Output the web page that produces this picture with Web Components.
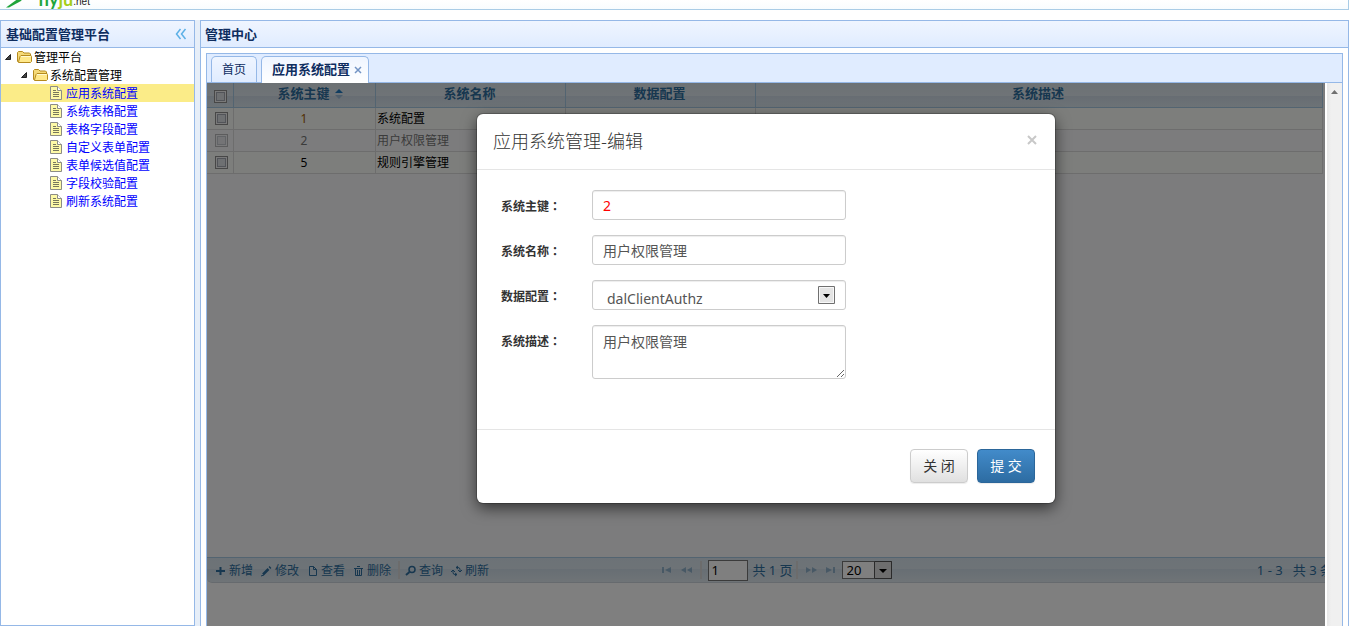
<!DOCTYPE html>
<html lang="zh-CN">
<head>
<meta charset="utf-8">
<title>管理中心</title>
<style>
html, body { margin: 0; height: 100%; }
body {
  --line: #95b8e7;
  --ink: #0e2d5f;
  --grid-ink: #2e6e9e;
  --grid-line: #a6c9e2;
  font: 12px/18px "Noto Sans", "Noto Sans CJK SC", sans-serif;
  color: #000; background: #fff; overflow: hidden;
}
</style>
</head>
<body>
<app-shell>
  <site-banner slot="banner"></site-banner>
  <side-panel slot="west" heading="基础配置管理平台">
    <tree-item level="0" kind="folder">管理平台</tree-item>
    <tree-item level="1" kind="folder">系统配置管理</tree-item>
    <tree-item level="2" kind="page" selected>应用系统配置</tree-item>
    <tree-item level="2" kind="page">系统表格配置</tree-item>
    <tree-item level="2" kind="page">表格字段配置</tree-item>
    <tree-item level="2" kind="page">自定义表单配置</tree-item>
    <tree-item level="2" kind="page">表单候选值配置</tree-item>
    <tree-item level="2" kind="page">字段校验配置</tree-item>
    <tree-item level="2" kind="page">刷新系统配置</tree-item>
  </side-panel>
  <main-panel slot="center" heading="管理中心">
    <tab-button slot="tabs">首页</tab-button>
    <tab-button slot="tabs" active>应用系统配置</tab-button>
    <work-frame>
      <data-grid></data-grid>
      <pager-bar></pager-bar>
      <edit-dialog slot="dialog"></edit-dialog>
    </work-frame>
  </main-panel>
</app-shell>

<script>
const define = (name, html, setup) => {
  const tpl = document.createElement('template');
  tpl.innerHTML = html;
  customElements.define(name, class extends HTMLElement {
    constructor() {
      super();
      this.attachShadow({ mode: 'open' }).append(tpl.content.cloneNode(true));
    }
    connectedCallback() { if (setup) setup(this, this.shadowRoot); }
  });
};

define('app-shell', `
<style>
:host { display: flex; flex-direction: column; height: 100vh; }
.regions { flex: 1; min-height: 0; display: flex; gap: 5px; margin-top: 10px; background: #e6eef8; }
</style>
<slot name="banner"></slot>
<div class="regions"><slot name="west"></slot><slot name="center"></slot></div>`);

define('site-banner', `
<style>
:host { display: flex; align-items: flex-end; box-sizing: border-box; height: 10px; overflow: hidden;
  border: solid #a9cce6; border-width: 0 1px 1px 0; background: linear-gradient(#fff, #f8fcfe); padding-left: 5px; }
svg { width: 33px; height: 20px; flex: none; }
b { font: bold 18px/20px Lato, "Noto Sans", sans-serif; color: #1fa53c; }
i { font-style: normal; color: #a5ce1b; }
small { font: 10px/14px "Liberation Sans", sans-serif; color: #222; }
</style>
<svg viewBox="0 0 33 20"><path d="M1 18.500 L14 9 H18 L16 12 L4 18.500 Z" fill="#1fa53c"/></svg>
<b>fly<i>ju</i></b><small>.net</small>`);

define('side-panel', `
<style>
:host { display: flex; flex-direction: column; box-sizing: border-box; width: 195px; flex: none;
  border: 1px solid var(--line); background: #fff; }
header { display: flex; align-items: center; justify-content: space-between; box-sizing: border-box; height: 27px;
  padding: 0 7px 0 5px; border-bottom: 1px solid var(--line); background: linear-gradient(#eff5ff, #e0ecff); }
h2 { margin: 0; font-size: 13px; line-height: 16px; color: var(--ink); }
button { border: 0; padding: 0; background: none; height: 12px; }
svg { display: block; }
</style>
<header><h2></h2><button aria-label="收起"><svg width="12" height="12" fill="none" stroke="#5cb0e6" stroke-width="1.5"><path d="M5.500 1 1.500 6l4 5M10.500 1l-4 5 4 5"/></svg></button></header>
<nav><slot></slot></nav>`, (el, r) => { r.querySelector('h2').textContent = el.getAttribute('heading'); });

const folderIcon = `<svg width="16" height="14" viewBox="0 0 16 14"><path d="M.5 11.500V2.500L1.500 1.500h4l1.500 1.500h5.500l1 1V6" fill="#f5d977" stroke="#b58a1e"/><path d="M.5 11.500 1.500 12.500h12l1-1V6.500L14 5.500H4L3 6.500 1.500 12" fill="#ffe88a" stroke="#b58a1e"/><path d="M4 6.500h9.500" stroke="#fff9d0"/></svg>`;
const pageIcon = `<svg width="16" height="14" viewBox="0 0 16 14"><path d="M1.500.5h7l4 4v9h-11z" fill="#fdf9a6" stroke="#8c8c86"/><path d="M8.500.5v4h4" fill="#fff" stroke="#8c8c86"/><path d="M4 4.500h3M4 6.500h6M4 8.500h6M4 10.500h6" stroke="#77775c"/></svg>`;

define('tree-item', `
<style>
:host { display: block; }
:host([selected]) { background: #fbec88; }
div { display: flex; align-items: center; height: 18px; }
.arrow { width: 16px; height: 18px; }
.icon { display: flex; width: 16px; margin-right: 1px; }
.arrow, .icon { flex: none; }
a { padding-top: 2px; color: #00f; text-decoration: none; white-space: nowrap; }
:host([kind=folder]) a { color: #000; }
:host([kind=page]) .arrow svg { display: none; }
</style>
<div><span class="arrow"><svg width="16" height="18"><path d="M4.500 11.500h5v-5z" fill="#444" stroke="#222"/></svg></span><span class="icon"></span><a href="#"><slot></slot></a></div>`,
(el, r) => {
  r.querySelector('div').style.paddingLeft = el.getAttribute('level') * 16 + 'px';
  r.querySelector('.icon').innerHTML = el.getAttribute('kind') === 'folder' ? folderIcon : pageIcon;
});

define('main-panel', `
<style>
:host { display: flex; flex-direction: column; flex: 1; min-width: 0; box-sizing: border-box;
  border: solid var(--line); border-width: 1px 1px 0; background: #fff; }
header { box-sizing: border-box; height: 27px; padding: 5px 4px; border-bottom: 1px solid var(--line);
  background: linear-gradient(#eff5ff, #e0ecff); }
h2 { margin: 0; font-size: 13px; line-height: 16px; color: var(--ink); }
.tabs { flex: 1; min-height: 0; display: flex; flex-direction: column; margin: 5px 5px 0;
  border: solid var(--line); border-width: 1px 1px 0; }
.strip { display: flex; gap: 4px; box-sizing: border-box; height: 29px; padding: 2px 4px 0; background: #e0ecff;
  border-bottom: 1px solid var(--line); }
</style>
<header><h2></h2></header>
<div class="tabs"><div class="strip"><slot name="tabs"></slot></div><slot></slot></div>`,
(el, r) => { r.querySelector('h2').textContent = el.getAttribute('heading'); });

define('tab-button', `
<style>
:host { display: flex; align-items: center; box-sizing: border-box; height: 26px; border: 1px solid var(--line); border-bottom: 0;
  border-radius: 5px 5px 0 0; padding: 0 10px; background: linear-gradient(#eff5ff, #e0ecff); }
:host([active]) { height: 27px; padding: 0 6px 2px 10px; background: linear-gradient(#eff5ff, #fff); }
button { border: 0; padding: 0; background: none; font: inherit; color: var(--ink); }
:host([active]) .name { font-weight: bold; font-size: 13px; }
.close { display: none; margin: 2px 0 0 4px; height: 8px; }
:host([active]) .close { display: block; }
svg { display: block; }
</style>
<button class="name"><slot></slot></button><button class="close" aria-label="关闭标签"><svg width="8" height="8" stroke="#7394c4" stroke-width="1.500"><path d="M1 1l6 6M7 1l-6 6"/></svg></button>`);

define('work-frame', `
<style>
:host { flex: 1; min-height: 0; display: flex; }
.view { position: relative; flex: 1; min-width: 0; display: flex; flex-direction: column; overflow: hidden; }
.shade { position: absolute; inset: 0; background: rgba(0,0,0,.5); padding: 31px 20px; display: flex; align-items: flex-start; justify-content: center; }
.bar { width: 16px; box-sizing: border-box; border-left: 1px solid #fff; background: linear-gradient(90deg, #e6e6e6, #f0f0f0 4px); flex: none; display: flex; justify-content: center; padding: 7px 1px 0 0; margin-left: 1px; }
</style>
<div class="view"><slot></slot><div class="shade"><slot name="dialog"></slot></div></div>
<div class="bar"><svg width="7" height="4"><path d="M0 4 3.500 0 7 4z" fill="#707070"/></svg></div>`);

define('data-grid', `
<style>
:host { flex: 1; min-height: 0; display: block; background: #f9f9fb; padding-right: 2px; }
table { width: 100%; table-layout: fixed; border-collapse: separate; border-spacing: 0; }
th, td { box-sizing: border-box; padding: 0 2px; border: solid #dadada; border-width: 0 1px 1px 0; white-space: nowrap; overflow: hidden; }
td { padding-left: 1px; }
th { height: 25px; padding: 0 3px 4px 1px; line-height: 16px; font-size: 13px; color: var(--grid-ink); border-color: var(--grid-line);
  background: linear-gradient(#d9e3e9, #dfe8ef 54%, #cfdae6 54%, #dae6ee); }
td { height: 22px; }
tr:nth-child(odd) td { background: #fbfdf9; }
tr.off td { color: #777; }
td.id { text-align: center; }
.pick, td.pick { text-align: center; padding: 0 0 0 2px; }
th.pick { padding: 2px 0 0; }
input { appearance: none; display: block; box-sizing: border-box; width: 13px; height: 13px; margin: 0 auto; border: 1px solid #8e8f8f;
  box-shadow: inset 0 0 0 1px #f4f4f4, inset 0 0 0 2px #a4a9b2; background: #dde0e4; }
.off input { opacity: .6; }
svg { margin: 0 -13px 0 5px; vertical-align: -1px; }
</style>
<table>
<colgroup><col style="width:27px"><col style="width:142px"><col style="width:190px"><col style="width:190px"><col></colgroup>
<thead><tr><th class="pick"><input type="checkbox" aria-label="全选"></th><th>系统主键<svg width="8" height="10"><path d="M0 4 4 0 8 4z" fill="#217bc0"/><path d="M0 6h8L4 10z" fill="#9dbdd8"/></svg></th><th>系统名称</th><th>数据配置</th><th>系统描述</th></tr></thead>
<tbody>
<tr><td class="pick"><input type="checkbox" aria-label="选择 1"></td><td class="id" style="color:#a05a00">1</td><td>系统配置</td><td></td><td></td></tr>
<tr class="off"><td class="pick"><input type="checkbox" aria-label="选择 2" disabled></td><td class="id">2</td><td>用户权限管理</td><td></td><td></td></tr>
<tr><td class="pick"><input type="checkbox" aria-label="选择 5"></td><td class="id">5</td><td>规则引擎管理</td><td></td><td></td></tr>
</tbody></table>`);

define('pager-bar', `
<style>
:host { display: grid; grid-template-columns: 1fr auto 1fr; align-items: center; box-sizing: border-box; height: 26px; flex: none;
  width: calc(100% + 20px); margin-bottom: 43px; padding: 0 12px 0 5px; border: solid var(--grid-line); border-width: 1px 0; border-bottom-color: #ccd5dc;
  border-radius: 0 0 5px 5px; color: var(--grid-ink);
  background: linear-gradient(#d9e5ee, #dce7ef 46%, #cfdde8 46%, #dfe8ee); }
.set { display: flex; align-items: center; white-space: nowrap; }
button { display: flex; align-items: center; border: 0; padding: 0; background: none; font: inherit; color: inherit; }
.act { width: 46px; gap: 1px; padding-top: 2px; }
.act svg { width: 16px; height: 12px; }
svg { fill: none; stroke: currentColor; flex: none; }
.sep { width: 2px; height: 18px; margin: 0 2px; background: #d8d8d8; }
.nav { width: 20px; justify-content: center; opacity: .4; }
.nav svg { fill: currentColor; stroke: none; }
.mid { font-size: 13px; padding-left: 4px; }
.mid input { box-sizing: border-box; width: 40px; height: 21px; margin: 0 4px 0 3px; padding: 0 2px; border: 1px solid #777; background: #fff; font: inherit; }
.mid .sep { margin: 0 3px; }
.pick { position: relative; display: flex; margin-left: 1px; }
select { appearance: none; width: 50px; height: 18px; padding: 0 4px; border: 1px solid #777; border-radius: 0; background: #fff; font: inherit; line-height: 16px; color: #000; }
.pick svg { position: absolute; right: 0; top: 0; pointer-events: none; }
.sum { justify-content: flex-end; font-size: 13px; white-space: pre; }
</style>
<div class="set">
<button class="act"><svg><path d="M4 6h9M8.500 2v8" stroke-width="2"/></svg>新增</button>
<button class="act"><svg><path d="M5 9.500l5.500-5.500M11.500 3l1-1" stroke-width="2.500"/><path d="M3 11l3-1"/></svg>修改</button>
<button class="act"><svg><path d="M5.500 1.500h4l3 3v6h-7zM9.500 1.500v3h3"/></svg>查看</button>
<button class="act"><svg><path d="M4 3.500h9M7 1.500h3M5.500 4v6.500h6V4M7.500 5v5M9.500 5v5"/></svg>删除</button>
<span class="sep"></span>
<button class="act"><svg><circle cx="10" cy="4.500" r="3" stroke-width="1.500"/><path d="M7.500 7 4 10" stroke-width="2"/></svg>查询</button>
<button class="act"><svg><path d="M8 2.500h2a2 2 0 0 1 2 2V7M10 5l2 2 2-2M9 9.500H7a2 2 0 0 1-2-2V5M3 7l2-2 2 2M10 1 8 2.500l2 1.500M7 8l2 1.500L7 11"/></svg>刷新</button>
</div>
<div class="set mid">
<button class="nav" aria-label="首页"><svg width="10" height="6"><path d="M0 0h2v6H0zM9 0v6L3 3z"/></svg></button>
<button class="nav" aria-label="上一页"><svg width="12" height="6"><path d="M5 0v6L0 3zM11 0v6L6 3z"/></svg></button>
<span class="sep"></span><input value="1" aria-label="页码"><span>共 1 页</span><span class="sep"></span>
<button class="nav" aria-label="下一页"><svg width="12" height="6"><path d="M1 0v6l5-3zM7 0v6l5-3z"/></svg></button>
<button class="nav" aria-label="末页"><svg width="10" height="6"><path d="M0 0v6l6-3zM7 0h2v6H7z"/></svg></button>
<span class="pick"><select aria-label="每页条数"><option>20</option></select><svg width="18" height="18"><path d="M.5.5h17v17H.5z" fill="#ddd" stroke="#555"/><path d="M5 8h8l-4 4z" fill="#000" stroke="none"/></svg></span>
</div>
<div class="set sum">1 - 3   共 3 条</div>`);

define('edit-dialog', `
<style>
:host { display: block; box-sizing: border-box; width: 578px; max-width: 100%; border-radius: 6px; background: #fff; color: #333;
  box-shadow: 0 0 0 1px rgba(0,0,0,.2), 0 5px 15px rgba(0,0,0,.6); }
header { display: flex; align-items: center; justify-content: space-between; box-sizing: border-box; height: 56px; padding: 0 18px 4px 16px; border-bottom: 1px solid #e5e5e5; }
h3 { margin: 0; font-size: 18px; line-height: 24px; font-weight: 300; font-family: "Noto Sans CJK SC", sans-serif; }
.x { border: 0; padding: 0; height: 14px; background: none; }
.x svg { display: block; }
form { display: grid; grid-template-columns: 91px 254px; row-gap: 15px; padding: 20px 24px 50px; }
label { padding-top: 7px; font-weight: bold; }
.colon { font-family: "Noto Sans CJK TC", sans-serif; }
input, textarea, select { display: block; box-sizing: border-box; width: 100%; height: 30px; margin: 0; padding: 4px 10px; border: 1px solid #ccc; border-radius: 3px;
  box-shadow: inset 0 1px 1px rgba(0,0,0,.075); background: #fff; color: #555; font: 14px/20px "Noto Sans", "Noto Sans CJK SC", sans-serif; }
textarea { height: 54px; padding-top: 6px; resize: vertical; }
select { appearance: none; padding: 8px 14px 0; }
#key { color: #f00; }
.pick { position: relative; }
.pick svg { position: absolute; right: 11px; top: 6px; pointer-events: none; }
footer { display: flex; justify-content: flex-end; gap: 9px; padding: 19px 20px 20px; border-top: 1px solid #e5e5e5; }
footer button { width: 58px; height: 34px; padding: 0; border: 1px solid #ccc; border-radius: 4px; background: linear-gradient(#fff, #e0e0e0);
  color: #333; font: 14px/20px "Noto Sans", "Noto Sans CJK SC", sans-serif; box-shadow: 0 1px 1px rgba(0,0,0,.075); }
footer .main { border-color: #2b669a; background: linear-gradient(#428bca, #2d6ca2); color: #fff; }
</style>
<header><h3>应用系统管理-编辑</h3><button class="x" aria-label="关闭"><svg width="10" height="10" stroke="#c8c8c8" stroke-width="2"><path d="M1 1l8 8M9 1l-8 8"/></svg></button></header>
<form>
<label for="key">系统主键<span class="colon" lang="zh-TW">：</span></label><input id="key" value="2">
<label for="name">系统名称<span class="colon" lang="zh-TW">：</span></label><input id="name" value="用户权限管理">
<label for="data">数据配置<span class="colon" lang="zh-TW">：</span></label><div class="pick"><select id="data"><option>dalClientAuthz</option></select><svg width="17" height="18"><path d="M.5.5h16v17H.5z" fill="#e4e4e4" stroke="#707070"/><path d="M1.500 1.500h14v15h-14z" fill="none" stroke="#f8f8f8"/><path d="M5 8h7l-3.500 4z"/></svg></div>
<label for="desc">系统描述<span class="colon" lang="zh-TW">：</span></label><textarea id="desc">用户权限管理</textarea>
</form>
<footer><button>关 闭</button><button class="main">提 交</button></footer>`);
</script>
</body>
</html>
